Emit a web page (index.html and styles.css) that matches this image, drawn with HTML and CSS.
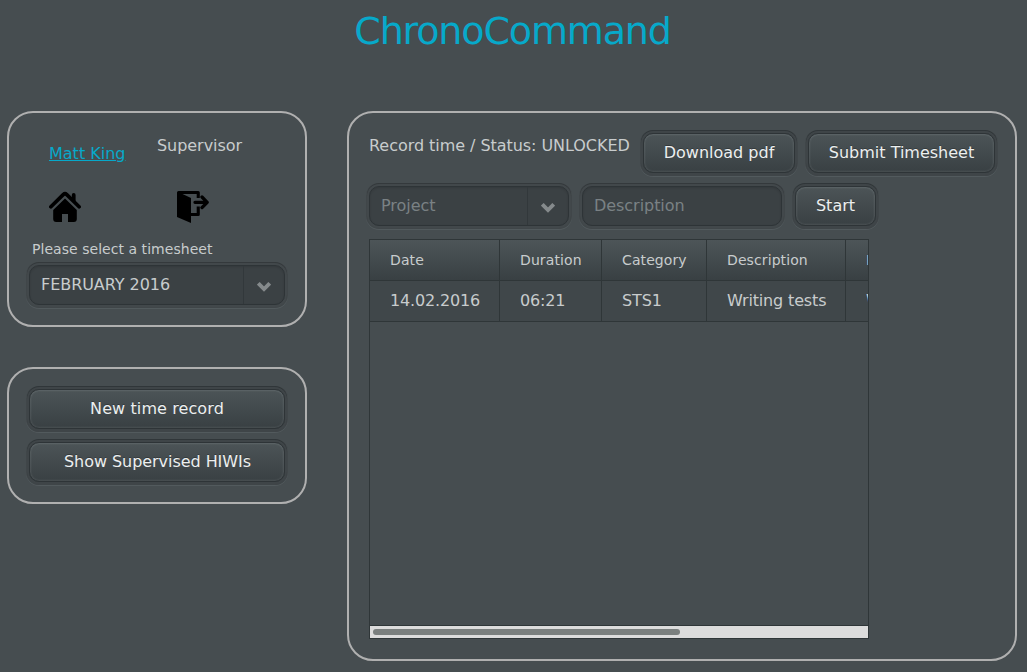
FILE: index.html
```html
<!DOCTYPE html>
<html lang="en">
<head>
<meta charset="utf-8">
<title>ChronoCommand</title>
<link rel="stylesheet" href="styles.css">
</head>
<body>
<header class="title">ChronoCommand</header>
<main class="layout">
  <div class="sidebar">
    <section class="panel profile">
      <div class="user">
        <a class="name" href="#">Matt King</a>
        <span class="role">Supervisor</span>
      </div>
      <div class="icons">
        <svg class="home" width="32" height="32" viewBox="0 0 32 32">
          <path d="M1.9 15.8 14.2 3.6Q16 2 17.8 3.6L30.1 15.8" fill="none" stroke="#000" stroke-width="3.7" stroke-linecap="round"/>
          <path d="M22.8 4Q22.8 2 24.7 2T26.6 4V11L22.8 7.2Z"/>
          <path d="M16 7.4 27.8 19V28Q27.8 31 24.8 31H19V23H13V31H7.2Q4.2 31 4.2 28V19Z"/>
        </svg>
        <svg class="exit" width="32" height="32" viewBox="0 0 32 32">
          <path d="M0 1.5Q0 0 1.5 0H21.3Q22.8 0 22.8 1.5V7H19.7V3H5.5L14 7V32L0 26Z"/>
          <path d="M14 25V22H19.7V15.6H22.8V23.5Q22.8 25 21.3 25Z"/>
          <path d="M18 11.3H30M25 6 30.2 11.3 25 16.6" fill="none" stroke="#000" stroke-width="3.3" stroke-linecap="round" stroke-linejoin="round"/>
        </svg>
      </div>
      <label class="caption">Please select a timesheet</label>
      <div class="field combo"><span class="value">FEBRUARY 2016</span><span class="arrow"><svg width="14" height="10" viewBox="0 0 14 10"><path d="M1.3 1.3 7 7 12.7 1.3"/></svg></span></div>
    </section>
    <section class="panel actions">
      <button class="btn new-record">New time record</button>
      <button class="btn supervised">Show Supervised HIWIs</button>
    </section>
  </div>
  <section class="panel content">
    <div class="row status-row">
      <span class="status">Record time / Status: UNLOCKED</span>
      <button class="btn download">Download pdf</button>
      <button class="btn submit">Submit Timesheet</button>
    </div>
    <div class="row entry-row">
      <div class="field combo project"><span class="value hint">Project</span><span class="arrow"><svg width="14" height="10" viewBox="0 0 14 10"><path d="M1.3 1.3 7 7 12.7 1.3"/></svg></span></div>
      <div class="field desc"><span class="value hint">Description</span></div>
      <button class="btn start">Start</button>
    </div>
    <div class="grid">
      <div class="tr head"><span>Date</span><span>Duration</span><span>Category</span><span>Description</span><span>P</span></div>
      <div class="tr"><span>14.02.2016</span><span>06:21</span><span>STS1</span><span>Writing tests</span><span>W</span></div>
      <div class="scroll"><div class="thumb"></div></div>
    </div>
  </section>
</main>
</body>
</html>
```
FILE: styles.css
```css
* { box-sizing: border-box; }
body {
  margin: 0;
  height: 672px;
  overflow: hidden;
  background: #464d50;
  color: #c8cccd;
  font: 16px/20px "DejaVu Sans", sans-serif;
  letter-spacing: -0.05px;
}
.title {
  height: 111px;
  padding-top: 8px;
  padding-right: 2px;
  text-align: center;
  color: #07a9ca;
  font-size: 38px;
  line-height: 46px;
  letter-spacing: -0.03em;
}
.layout { display: flex; gap: 40px; padding-left: 7px; align-items: flex-start; }
.sidebar { display: flex; flex-direction: column; gap: 40px; width: 300px; }
.panel { border: 2px solid #b0b0b0; border-radius: 26px; }
.profile { height: 216px; padding: 22px 20px; }
.user { display: flex; height: 56px; }
.name { width: 108px; padding: 9px 0 0 20px; color: #07a9ca; letter-spacing: 0; white-space: nowrap; }
.role { margin-left: 20px; padding-top: 1px; }
.icons { display: flex; gap: 96px; padding-left: 20px; height: 48px; }
.caption { display: block; height: 26px; padding-left: 3px; font-size: 14px; line-height: 20px; letter-spacing: 0.04px; }
.btn, .field {
  height: 40px;
  border: 1px solid #2e3437;
  border-radius: 10px;
}
.btn {
  padding: 0;
  background: linear-gradient(#4c5457, #394043);
  color: #ecefef;
  font: inherit;
  letter-spacing: 0;
  text-shadow: 0 -1px 0 rgba(0,0,0,.25);
  box-shadow: inset 0 1px 0 #596164, inset 0 0 2px 1px rgba(255,255,255,.09),
    0 0 0 2px #3f4548, 0 -1px 0 2px #303639, 0 1px 0 2px #3f4548, 0 0 0 3px #404649, 0 1px 0 3px #525a5d;
}
.field {
  display: flex;
  background: #3b4144;
  box-shadow: inset 0 1px 2px rgba(0,0,0,.12), 0 0 0 2px #42484b, 0 -1px 0 2px #34393c, 0 0 0 3px #404649, 0 1px 0 3px #525a5d;
}
.value { flex: 1; padding-left: 11px; line-height: 37px; }
.hint { color: #7a8184; }
.arrow { width: 41px; border-left: 1px solid #32383b; padding: 16px 0 0 13px; line-height: 0; }
.arrow path { fill: none; stroke: #858a8c; stroke-width: 3.8; }
.profile .combo { width: 256px; }
.actions { display: flex; flex-direction: column; gap: 13px; height: 137px; padding: 20px; }
.actions .btn { width: 256px; }
.new-record { letter-spacing: 0.1px; }
.actions .supervised { letter-spacing: -0.05px; padding-left: 1px; }
.content { display: flex; flex-direction: column; gap: 13px; width: 670px; height: 550px; padding: 20px; }
.row { display: flex; height: 40px; white-space: nowrap; }
.status { width: 274px; padding-top: 3px; }
.download { width: 152px; margin-right: 13px; }
.submit { width: 187px; }
.project { width: 200px; margin-right: 13px; }
.desc { width: 200px; margin-right: 13px; }
.start { width: 81px; }
.grid { display: flex; flex-direction: column; width: 500px; height: 400px; border: 1px solid #2f3638; overflow: hidden; }
.tr {
  display: grid;
  flex: none;
  grid-template-columns: 130px 102px 105px 139px 110px;
  height: 41px;
  border-bottom: 1px solid #2f3638;
  background: #40474a;
  line-height: 40px;
  letter-spacing: -0.15px;
}
.tr span { padding-left: 20px; border-right: 1px solid #2f3638; }
.head { background: linear-gradient(#4d5558, #394043); font-size: 14px; letter-spacing: 0.1px; }
.scroll { margin-top: auto; height: 13px; border-top: 1px solid #2f3638; background: #dcdcdc; padding: 3px; }
.thumb { width: 307px; height: 6px; border-radius: 3px; background: #7a7f7e; }
```
